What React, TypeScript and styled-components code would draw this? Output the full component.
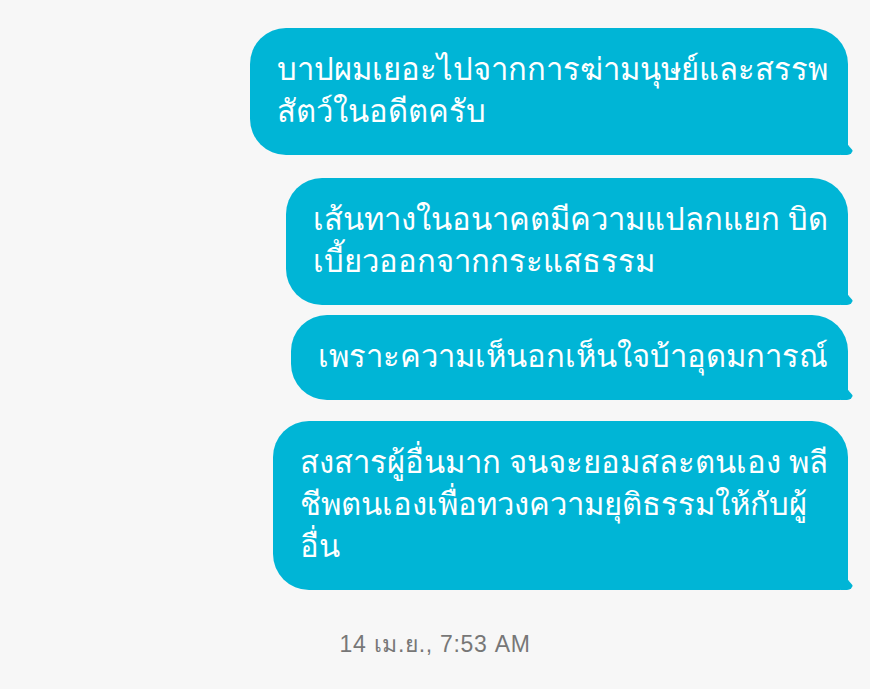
import styled, { createGlobalStyle } from "styled-components";

const GlobalStyle = createGlobalStyle`
    html, body {
        margin: 0;
        padding: 0;
        background: #f7f7f7;
    }
    body {
        font-family: "Noto Sans", "DejaVu Sans", sans-serif;
    }
`;

const messages = [
    {
        lines: ["บาปผมเยอะไปจากการฆ่ามนุษย์และสรรพ", "สัตว์ในอดีตครับ"],
        gap: 28,
    },
    {
        lines: ["เส้นทางในอนาคตมีความแปลกแยก บิด", "เบี้ยวออกจากกระแสธรรม"],
        gap: 23,
    },
    {
        lines: ["เพราะความเห็นอกเห็นใจบ้าอุดมการณ์"],
        gap: 10,
    },
    {
        lines: [
            "สงสารผู้อื่นมาก จนจะยอมสละตนเอง พลี",
            "ชีพตนเองเพื่อทวงความยุติธรรมให้กับผู้",
            "อื่น",
        ],
        gap: 21,
    },
];

const Screen = styled.div`
    width: 870px;
    height: 689px;
    display: flex;
    flex-direction: column;
    overflow: hidden;
`;

const Thread = styled.div`
    display: flex;
    flex-direction: column;
    align-items: flex-end;
    padding-right: 22px;
`;

const Bubble = styled.div<{ $gap: number }>`
    position: relative;
    margin-top: ${(p) => p.$gap}px;
    padding: 19px 20px 24px 27px;
    background: #00b5d6;
    color: #ffffff;
    border-radius: 36px 36px 8px 36px;
    font-size: 31px;
    line-height: 42px;
    white-space: nowrap;

    &::after {
        content: "";
        position: absolute;
        right: -5px;
        bottom: 0;
        width: 12px;
        height: 14px;
        background: #00b5d6;
        border-radius: 0 0 6px 0;
        clip-path: polygon(0 0, 60% 30%, 100% 70%, 100% 100%, 0 100%);
    }
`;

const Line = styled.div``;

const Stamp = styled.div`
    margin-top: 36px;
    text-align: center;
    color: #777777;
    font-family: "Liberation Sans", Arial, sans-serif;
    font-size: 23px;
    letter-spacing: 0.7px;
`;

export default function App() {
    return (
        <>
            <GlobalStyle />
            <Screen>
                <Thread>
                    {messages.map((m, i) => (
                        <Bubble key={i} $gap={m.gap}>
                            {m.lines.map((l, j) => (
                                <Line key={j}>{l}</Line>
                            ))}
                        </Bubble>
                    ))}
                </Thread>
                <Stamp>14 เม.ย., 7:53 AM</Stamp>
            </Screen>
        </>
    );
}
